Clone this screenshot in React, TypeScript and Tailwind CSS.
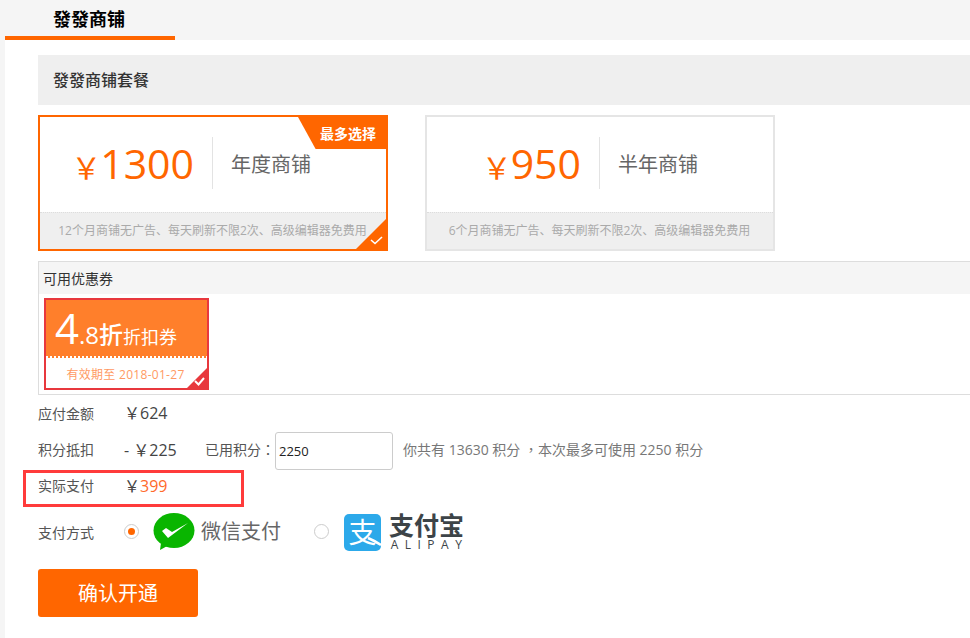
const font = { fontFamily: '"Open Sans","Noto Sans CJK SC",sans-serif' };
const tc = { fontFamily: '"Noto Sans CJK TC",sans-serif' };

function Plan({ price, name, desc, active }: { price: string; name: string; desc: string; active?: boolean }) {
  return (
    <div className={`relative w-[350px] h-[136px] border-2 flex flex-col overflow-hidden ${active ? 'border-[#ff6600]' : 'border-[#e5e5e5]'}`}>
      <div className="h-[95px] flex items-center">
        <div className="flex items-center justify-end shrink-0 w-[173px] h-[52px] pr-[18px] border-r border-[#e3e3e3] mt-[-3px]">
          <span className="text-[30px] leading-none text-[#ff6600] mr-[-1px] mt-[9px]">￥</span>
          <span className="text-[41px] leading-none text-[#ff6600] mt-[1px]">{price}</span>
        </div>
        <span className="ml-[18px] mt-[1px] text-[20px] leading-none text-[#666]">{name}</span>
      </div>
      <div className="flex-1 bg-[#efefef] border-t border-dotted border-[#ddd] flex items-center justify-center pr-[1px] text-[12px] text-[#aaa]">{desc}</div>
      {active && (
        <>
          <div className="absolute right-0 top-0 w-[88px] h-[32px] bg-[#ff6600] [clip-path:polygon(0_0,100%_0,100%_100%,20%_100%)] flex items-center justify-end pr-[10px] text-[14px] font-bold text-white">最多选择</div>
          <svg className="absolute right-0 bottom-0" width="30" height="30" viewBox="0 0 30 30">
            <path d="M30 0V30H0Z" fill="#ff6600" />
            <path d="M15 21l4 3.5 7-6.5" fill="none" stroke="#fff" strokeWidth="1.6" />
          </svg>
        </>
      )}
    </div>
  );
}

function WeChat() {
  return (
    <svg width="42" height="37" viewBox="0 0 42 37" className="block">
      <ellipse cx="21" cy="17.5" rx="20.5" ry="17.5" fill="#09b500" />
      <path d="M8 30l-1 7 9-5z" fill="#09b500" />
      <path d="M9 18l4-3 6 4L35 10 15 25z" fill="#fff" />
    </svg>
  );
}

export default function App() {
  return (
    <div className="w-[970px] h-[638px] bg-[#f5f5f5] overflow-hidden text-[#333]" style={font}>
      <div className="h-10 ml-[5px] flex">
        <div className="w-[170px] h-10 border-b-4 border-[#ff6600] pl-[48px] text-[18px] font-bold leading-[38px] text-black">發發商铺</div>
      </div>
      <div className="ml-[5px] h-[598px] bg-white pl-[33px] pt-[15px]">
        <div className="h-[50px] bg-[#efefef] pl-[15px] flex items-center text-[16px] font-medium text-[#333]">發發商铺套餐</div>
        <div className="mt-[10px] flex gap-[37px]">
          <Plan active price="1300" name="年度商铺" desc="12个月商铺无广告、每天刷新不限2次、高级编辑器免费用" />
          <Plan price="950" name="半年商铺" desc="6个月商铺无广告、每天刷新不限2次、高级编辑器免费用" />
        </div>
        <div className="mt-[10px] h-[134px] border border-[#ddd] border-r-0">
          <div className="h-[32px] bg-[#f5f5f5] pl-1 flex items-center text-[14px] text-[#333]">可用优惠券</div>
          <div className="relative ml-[5px] mt-1 w-[165px] h-[92px] border-2 border-[#e8383d] overflow-hidden">
            <div className="h-[56px] bg-[#ff7f2b] flex items-baseline pl-[9px] text-white leading-none">
              <span className="text-[42px] font-medium leading-[56px]">4</span>
              <span className="text-[24px] font-medium">.8折</span>
              <span className="text-[18px]">折扣券</span>
            </div>
            <div className="h-[2px] [background:repeating-linear-gradient(90deg,#fff_0_2px,#ff7f2b_2px_4px)]" />
            <div className="h-[30px] flex items-center justify-center pr-[2px] pt-1 text-[12px] tracking-[0.3px] text-[#ff9a63]">有效期至 2018-01-27</div>
            <svg className="absolute right-0 bottom-0" width="20" height="20" viewBox="0 0 20 20">
              <path d="M20 0V20H0Z" fill="#e8383d" />
              <path d="M8 13l3.5 3.5L17 10" fill="none" stroke="#fff" strokeWidth="2" />
            </svg>
          </div>
        </div>
        <div className="mt-[9px] h-5 pb-[2px] flex items-center">
          <span className="w-[86px] shrink-0 text-[14px] text-[#555]">应付金额</span>
          <span className="text-[16px] text-[#444]">￥624</span>
        </div>
        <div className="mt-2 h-[38px] flex items-center">
          <span className="w-[86px] shrink-0 mt-[-3px] text-[14px] text-[#555]">积分抵扣</span>
          <span className="w-[81px] shrink-0 mt-[-3px] text-[16px] text-[#444]">- ￥225</span>
          <span className="w-[70px] shrink-0 mt-[-3px] text-[14px] text-[#555]">已用积分<span style={tc}>：</span></span>
          <input readOnly value="2250" className="w-[118px] h-[38px] border border-[#ccc] rounded-[3px] px-[3px] text-[13px] text-[#222] outline-none" style={font} />
          <span className="ml-[10px] mt-[-3px] text-[14px] text-[#777]">你共有 13630 积分 <span style={tc}>，</span>本次最多可使用 2250 积分</span>
        </div>
        <div className="ml-[-15px] w-[221px] h-[37px] border-[3px] border-[#ff3b3b] pl-3 pb-[6px] flex items-center">
          <span className="w-[86px] shrink-0 text-[14px] text-[#555]">实际支付</span>
          <span className="text-[16px] text-[#444]">￥<span className="text-[#ff6a2b]">399</span></span>
        </div>
        <div className="mt-[4px] h-[44px] flex items-center">
          <span className="w-[86px] shrink-0 mt-[-2px] text-[14px] text-[#555]">支付方式</span>
          <span className="w-[15px] h-[15px] mt-[-3px] rounded-full border border-[#ccc] flex items-center justify-center">
            <span className="w-[7px] h-[7px] rounded-full bg-[#ff6600]" />
          </span>
          <span className="ml-[14px] mt-[-3px]"><WeChat /></span>
          <span className="ml-[6px] text-[20px] text-[#666] mt-[-2px]">微信支付</span>
          <span className="ml-[33px] w-[15px] h-[15px] mt-[-3px] rounded-full border border-[#ccc]" />
          <span className="relative ml-[15px] w-[37px] h-[37px] mt-[-2px] rounded-[5px] bg-[#2ca9ea] flex items-center justify-center text-[28px] leading-none text-white overflow-hidden">
            支
            <svg className="absolute left-0 top-0" width="37" height="37" viewBox="0 0 37 37">
              <path d="M24 24Q31 27 37 31" fill="none" stroke="#fff" strokeWidth="2.5" />
            </svg>
          </span>
          <span className="ml-[8px] mt-[-4px] flex flex-col items-center text-[#3d4448]">
            <span className="text-[25px] leading-[25px] font-bold">支付宝</span>
            <span className="mt-[1px] text-[12px] leading-[11px] tracking-[6.5px] mr-[-6px]">ALIPAY</span>
          </span>
        </div>
        <button className="mt-[14px] block w-[160px] h-[48px] pt-[1px] rounded-[3px] bg-[#ff6600] text-[20px] text-white">确认开通</button>
      </div>
    </div>
  );
}
